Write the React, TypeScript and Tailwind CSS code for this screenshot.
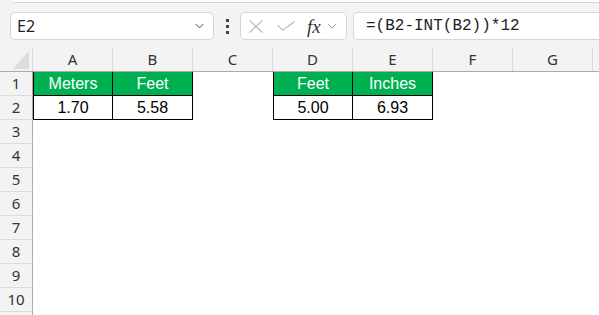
import React from 'react';

const cols = ['A', 'B', 'C', 'D', 'E', 'F', 'G', 'H'];
const rows = [1, 2, 3, 4, 5, 6, 7, 8, 9, 10, 11];

type Cell = { text: string; head?: boolean; left?: boolean };

// cells of the two little tables, keyed "row-col"
const cells: Record<string, Cell> = {
  '1-A': { text: 'Meters', head: true, left: true },
  '1-B': { text: 'Feet', head: true },
  '2-A': { text: '1.70', left: true },
  '2-B': { text: '5.58' },
  '1-D': { text: 'Feet', head: true, left: true },
  '1-E': { text: 'Inches', head: true },
  '2-D': { text: '5.00', left: true },
  '2-E': { text: '6.93' },
};

const Chevron = ({ className }: { className: string }) => (
  <svg viewBox="0 0 12 8" className={className} fill="none" stroke="currentColor" strokeWidth="1.3">
    <path d="M1 1.5 L6 6.5 L11 1.5" />
  </svg>
);

const App: React.FC = () => {
  return (
    <div
      className="w-[599px] h-[315px] overflow-hidden bg-[#f3f3f3] text-[#333]"
      style={{ fontFamily: '"Noto Sans", "Liberation Sans", sans-serif' }}
    >
      {/* ribbon edge */}
      <div className="ml-[13px] h-[3px] bg-white border-b border-[#d4d4d4] rounded-bl-[6px]" />

      {/* Formula bar */}
      <div className="mt-[9px] h-[28px] flex items-stretch">
        <div className="ml-[10px] w-[204px] rounded-[5px] border border-[#d6d6d6] bg-white flex items-center justify-between pl-[6px] pr-[9px]">
          <span className="text-[16px] text-[#222] leading-none">E2</span>
          <Chevron className="w-[9px] h-[6px] text-[#444]" />
        </div>
        <div className="w-[26px] flex flex-col items-center justify-center gap-[3px]">
          <div className="w-[3px] h-[3px] bg-[#444]" />
          <div className="w-[3px] h-[3px] bg-[#444]" />
          <div className="w-[3px] h-[3px] bg-[#444]" />
        </div>
        <div className="w-[107px] rounded-[5px] border border-[#d6d6d6] bg-white flex items-center pl-[7px]">
          <svg viewBox="0 0 16 14" className="w-[16px] h-[13px] text-[#b4b4b4]" fill="none" stroke="currentColor" strokeWidth="1.2">
            <path d="M1 0.5 L15 13.5 M15 0.5 L1 13.5" />
          </svg>
          <svg viewBox="0 0 20 11" className="ml-[12px] w-[20px] h-[10px] text-[#b4b4b4]" fill="none" stroke="currentColor" strokeWidth="1.2">
            <path d="M0.5 4.5 L6.5 10 L19.5 0.5" />
          </svg>
          <span
            className="ml-[11px] text-[19px] italic text-[#333] leading-none"
            style={{ fontFamily: '"Liberation Serif", serif' }}
          >
            fx
          </span>
          <Chevron className="ml-[6px] w-[10px] h-[6px] text-[#999]" />
        </div>
        <div className="ml-[6px] flex-1 rounded-l-[5px] border border-r-0 border-[#d6d6d6] bg-white flex items-center pl-[12px]">
          <span className="text-[16px] text-[#222]" style={{ fontFamily: '"Liberation Mono", monospace' }}>
            =(B2-INT(B2))*12
          </span>
        </div>
      </div>

      {/* Sheet */}
      <div className="mt-[8px]">
        <div className="flex h-[24px] border-b border-[#aaaaaa] bg-[#f3f3f3]">
          <div className="w-[33px] shrink-0 border-r border-[#d8d8d8] flex items-end justify-end pr-[3px] pb-[2px]">
            <svg viewBox="0 0 16 18" className="w-[16px] h-[18px]">
              <path d="M16 0 L16 18 L0 18 Z" fill="#dcdcdc" />
            </svg>
          </div>
          {cols.map((c) => (
            <div
              key={c}
              className="w-[80px] shrink-0 border-r border-[#dadada] flex items-center justify-center text-[15px] text-[#333]"
            >
              {c === 'H' ? '' : c}
            </div>
          ))}
        </div>
        {rows.map((r) => (
          <div key={r} className="flex h-[24px]">
            <div className="w-[33px] shrink-0 bg-[#f3f3f3] border-r border-[#aaaaaa] border-b border-b-[#dcdcdc] flex items-center justify-center text-[15px] text-[#333]">
              {r > 10 ? '' : r}
            </div>
            {cols.map((c) => {
              const cell = cells[`${r}-${c}`];
              if (!cell) return <div key={c} className="w-[80px] shrink-0 bg-white" />;
              return (
                <div
                  key={c}
                  className={`w-[80px] shrink-0 border-r border-b border-black flex items-center justify-center text-[16px] ${
                    cell.left ? 'border-l' : ''
                  } ${cell.head ? 'bg-[#00b050] text-white' : 'bg-white text-black'}`}
                  style={{ fontFamily: '"Liberation Sans", Arial, sans-serif' }}
                >
                  {cell.text}
                </div>
              );
            })}
          </div>
        ))}
      </div>
    </div>
  );
};

export default App;
